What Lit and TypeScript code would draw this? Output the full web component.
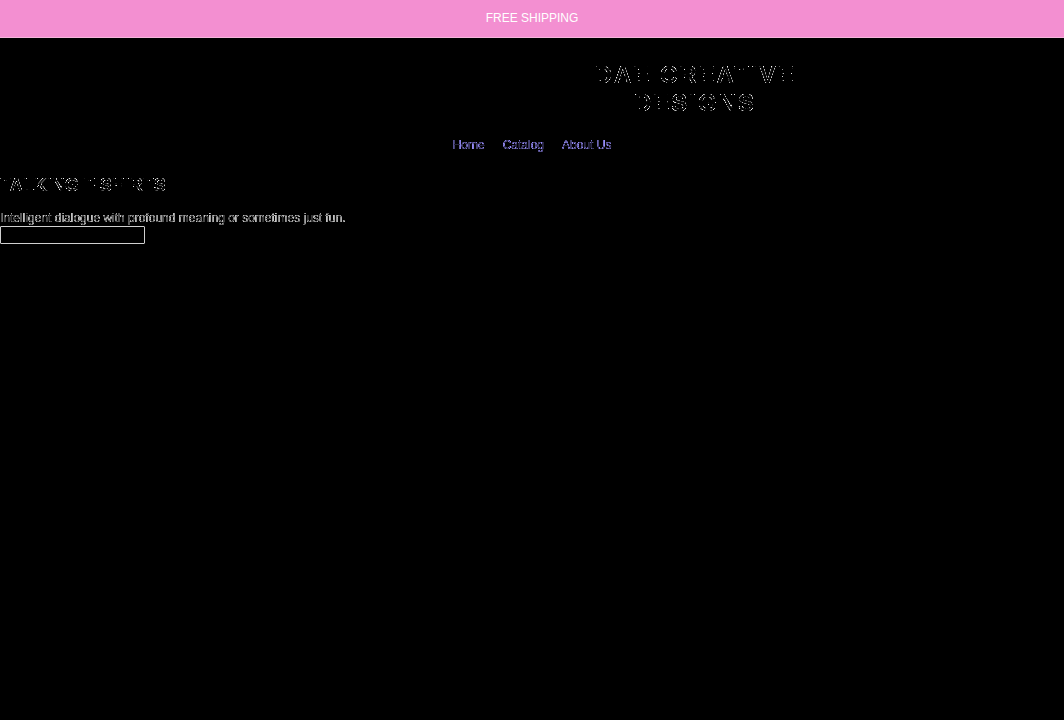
import { LitElement, html, css } from "lit";
import { customElement } from "lit/decorators.js";

@customElement("app-root")
export class AppRoot extends LitElement {
  static styles = css`
    :host {
      display: block;
      min-height: 100vh;
      background: #000;
      color: #fff;
      font-family: "Liberation Sans", Arial, sans-serif;
      font-size: 12px;
      line-height: 18px;
    }
    .defs { position: absolute; width: 0; height: 0; }
    .promo {
      display: flex;
      justify-content: center;
      padding: 10px 0;
      background: #f38fd1;
      border-bottom: 1px solid #f5b5dc;
      color: #fff;
    }
    .promo p { margin: 0; line-height: 17px; }
    .edge { filter: url(#edge); }
    .carved { filter: url(#carved); }
    .brand {
      display: flex;
      justify-content: center;
      padding: 23px 0 19px 326px;
    }
    .brand a {
      max-width: 240px;
      color: #fff;
      font-size: 24px;
      font-weight: 700;
      line-height: 28px;
      letter-spacing: 2px;
      text-align: center;
      text-decoration: none;
    }
    nav { display: flex; justify-content: center; gap: 18px; }
    nav a { color: #9a90ff; text-decoration: none; }
    h1 {
      margin: 20px 0 14px;
      font-size: 18px;
      line-height: 22px;
    }
    .lead { margin: 0; line-height: 16px; color: #c8c8c8; }
    .field {
      display: block;
      box-sizing: border-box;
      width: 145px;
      height: 18px;
      padding: 1px 2px;
      border: 1px solid #d0d0d0;
      border-radius: 1px;
      background: #000;
      color: #fff;
      font: inherit;
    }
  `;

  render() {
    return html`
      <svg class="defs" aria-hidden="true">
        <filter id="edge" color-interpolation-filters="sRGB">
          <feComponentTransfer>
            <feFuncA type="table" tableValues="0 1 0.25" />
          </feComponentTransfer>
        </filter>
        <!-- Keeps slanted and curved contours, drops upright and level ones -->
        <filter id="carved" color-interpolation-filters="sRGB">
          <feConvolveMatrix in="SourceGraphic" order="2" divisor="1" kernelMatrix="1 -1 -1 1" result="rise" />
          <feConvolveMatrix in="SourceGraphic" order="2" divisor="1" kernelMatrix="-1 1 1 -1" result="fall" />
          <feMerge result="slant">
            <feMergeNode in="rise" />
            <feMergeNode in="fall" />
          </feMerge>
          <feComponentTransfer in="slant" result="mask">
            <feFuncA type="linear" slope="3.5" intercept="-0.4" />
          </feComponentTransfer>
          <feComponentTransfer in="SourceGraphic" result="fringe">
            <feFuncA type="table" tableValues="0 0.9 1 0.8 0.1" />
          </feComponentTransfer>
          <feComposite in="fringe" in2="mask" operator="in" />
        </filter>
      </svg>
      <div class="promo"><p>FREE SHIPPING</p></div>
      <header>
        <div class="brand carved"><a href="#">DAE CREATIVE DESIGNS</a></div>
        <nav class="edge">
          <a href="#">Home</a><a href="#">Catalog</a><a href="#">About Us</a>
        </nav>
      </header>
      <main>
        <h1 class="carved">TALKING T-SHIRTS</h1>
        <p class="lead edge">Intelligent dialogue with profound meaning or sometimes just fun.</p>
        <input class="field" type="text" aria-label="Search" />
      </main>
    `;
  }
}
